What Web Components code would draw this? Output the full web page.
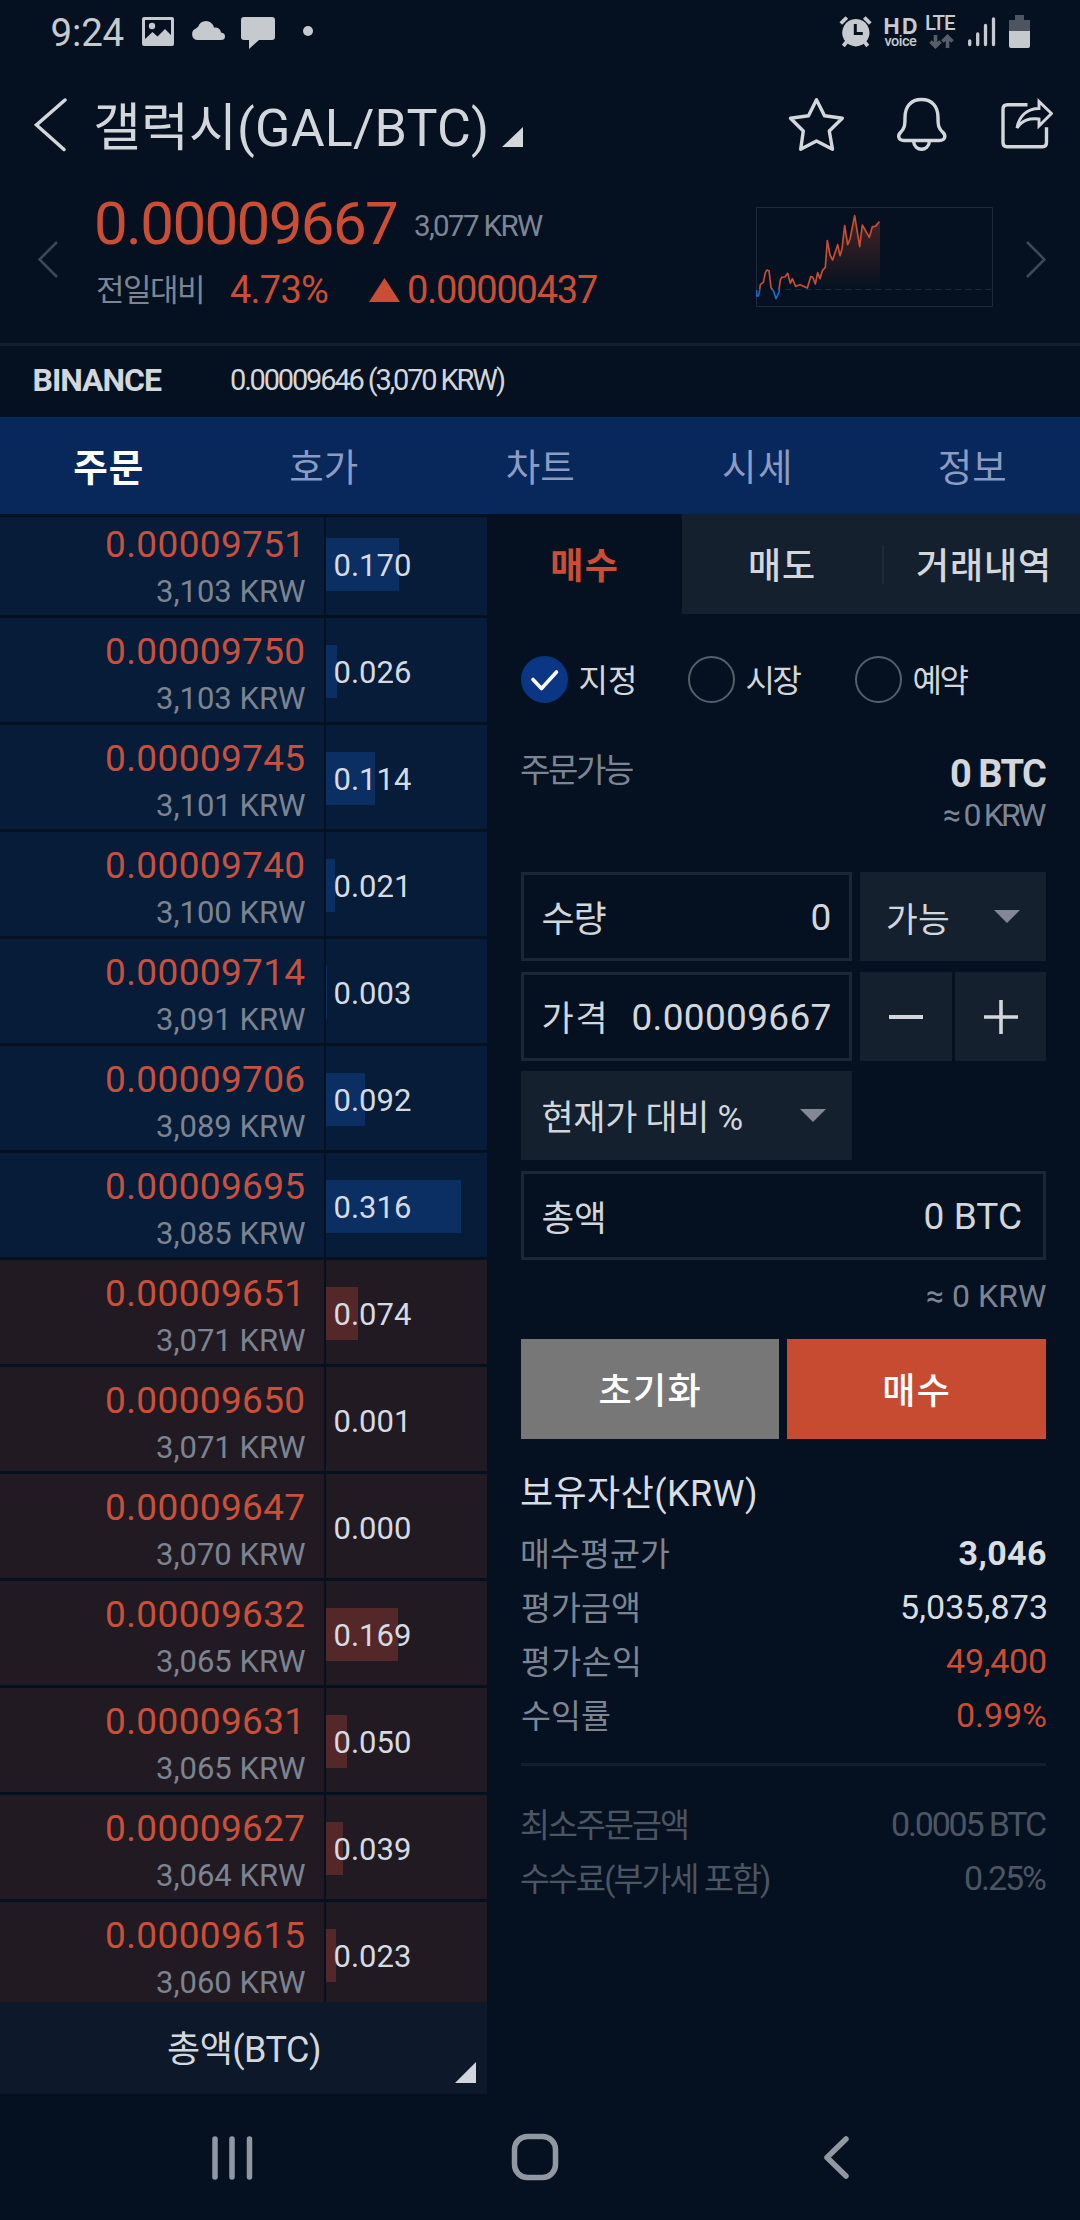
<!DOCTYPE html>
<html lang="ko">
<head>
<meta charset="utf-8">
<title>갤럭시(GAL/BTC)</title>
<style>
html,body{margin:0;background:#051120}
body{width:1080px;height:2220px;overflow:hidden;font-family:Roboto,"Noto Sans CJK KR",sans-serif;color:#d3d7dc;
 --up:#cb4d34;--muted:#7d8594;--dim:#4c5562;--panel:#15202e;--line:#1b2735}
</style>
</head>
<body>
<trade-app></trade-app>
<script>
function define(name, css, html, extra) {
  const tpl = document.createElement('template');
  tpl.innerHTML = '<style>:host{display:block;box-sizing:border-box}*{box-sizing:border-box}svg{display:block;flex:none}' + css + '</style>' + html;
  customElements.define(name, class extends HTMLElement {
    connectedCallback() {
      if (this.shadowRoot) return;
      this.attachShadow({mode: 'open'}).appendChild(tpl.content.cloneNode(true));
      if (extra) extra.call(this, this.shadowRoot);
    }
  });
}

// A single line of text whose letters are tracked so that the glyphs span exactly "w" pixels.
const pen = document.createElement('canvas').getContext('2d');
define('fit-text',
  ':host{flex:none;white-space:pre}span{display:block;width:max-content}',
  '<span><slot></slot></span>',
  function (root) {
    const text = this.textContent, size = +this.getAttribute('size'), w = +this.getAttribute('w');
    const weight = this.getAttribute('weight') || 400, h = this.getAttribute('h') || 40;
    const family = (this.getAttribute('face') || 'Roboto') + ', "Noto Sans CJK KR", sans-serif';
    pen.font = weight + ' ' + size + 'px ' + family;
    const m = pen.measureText(text);
    const ink = m.actualBoundingBoxLeft + m.actualBoundingBoxRight;
    const gap = text.length > 1 ? (w - ink) / (text.length - 1) : 0;
    this.style.cssText += `;width:${w}px;height:${h}px;line-height:${h}px;font-family:${family};font-size:${size}px;font-weight:${weight}`;
    const span = root.querySelector('span');
    span.style.letterSpacing = gap + 'px';
    span.style.marginLeft = m.actualBoundingBoxLeft + 'px';
    // Hangul glyphs sit slightly high in a line box set by the Latin font.
    if (/^[가-힣]/.test(text)) span.style.paddingTop = '1.5px';
  });

define('status-bar', `
  :host{display:flex;height:64px;padding:15px 50px 0 51.6px;color:#c6c9ce}
  .left{margin-left:18px}.right{display:flex;margin-left:auto}
  .hd{margin-left:12.500px;display:flex;flex-direction:column}
  .lte{margin-left:9px}`, `
  <fit-text size="38.500" w="72" h="36">9:24</fit-text>
  <svg class="left" width="172" height="36" viewBox="142 15 172 36" fill="#c6c9ce">
    <path fill-rule="evenodd" d="M144 17h28a2 2 0 0 1 2 2v25a2 2 0 0 1-2 2h-28a2 2 0 0 1-2-2V19a2 2 0 0 1 2-2zM145 20v19l7.500-7 5 4.500 7.500-7.500 6 6V20z"/>
    <circle cx="152" cy="26" r="3.200"/>
    <path d="M197 40a6 6 0 0 1-1-11.500q1-1.500 2-1.500 2-6 8-6 6 0 8 6.500 6-.5 7 5 4 .5 4 4t-4 3.500z"/>
    <path d="M244 17h28q3 0 3 3v17q0 3-3 3h-13l-10 9v-9h-5q-3 0-3-3V20q0-3 3-3z"/>
    <circle cx="308" cy="31" r="5"/>
  </svg>
  <div class="right">
    <svg width="33" height="34" viewBox="839.200 15 33 34" fill="#c6c9ce">
      <path fill-rule="evenodd" d="M856 19a13.700 13.700 0 1 0 .1 0zM854 24h3v8h6v3h-9z"/>
      <path d="M841 23.500l6-6M870.500 23.500l-6-6M843.500 46l4-5M868 46l-4-5" stroke="#c6c9ce" stroke-width="3.800"/>
    </svg>
    <div class="hd"><fit-text face="Inter" size="21.500" w="32.500" h="22" weight="700">HD</fit-text><fit-text size="14.500" w="32.500" h="9" weight="500">voice</fit-text></div>
    <div class="lte"><fit-text size="20.500" w="30" h="17" weight="500">LTE</fit-text>
      <svg width="31" height="17" viewBox="926 32 31 17" fill="none" stroke="#555e69" stroke-width="3.600"><path d="M935.500 35v11M930.500 41.500l5 5 5-5M947.500 48V37M942.500 41.500l5-5 5 5"/></svg></div>
    <svg style="margin-left:10px" width="63" height="34" viewBox="967 15 63 34" fill="#c6c9ce">
      <path d="M969.700 41v3.500M977.700 34v10.500M985.500 25.500v19M993.500 19v25.500" stroke="#c6c9ce" stroke-width="3.300" stroke-linecap="round"/>
      <path d="M1015 15h9v5h6v12h-21V20h6z" fill="#4d5560"/><path d="M1009 31h21v15q0 2-2 2h-17q-2 0-2-2z"/>
    </svg>
  </div>`);

define('title-bar', `
  :host{display:flex;height:122px;align-items:center;padding:0 27px 0 34px}
  fit-text{margin:4px 0 0 29px}.drop{margin:24px 0 0 16px}.actions{display:flex;margin-left:auto;align-items:center}`, `
  <svg width="33" height="56" viewBox="34 97 33 56" fill="none" stroke="#d3d7dc" stroke-width="3.500" stroke-linecap="round"><path d="M65 100L36.500 125 64 149.500"/></svg>
  <fit-text size="52" w="390" h="60">갤럭시(GAL/BTC)</fit-text>
  <svg class="drop" width="21" height="20"><path d="M21 0v20H0z" fill="#d3d7dc"/></svg>
  <div class="actions">
    <svg width="265" height="56" viewBox="788 97 265 56" fill="none" stroke="#d3d7dc" stroke-width="3.400" stroke-linejoin="round">
      <path d="M816.500 99.700L824.500 115.800 842.300 118.300 829.300 131 832.500 149.300 816.500 141 800.700 149.300 803.300 131 790.500 118.300 808.500 115.800z"/>
      <path d="M904 140.500c-6 0-6.500-5-3.500-8 4-4 4.500-7 4.500-15 0-11 6-18 16.500-18s16.500 7 16.500 18c0 8 .5 11 5 15 3 3 2.500 8-3.500 8zM913.500 141c1 11 15 11 16 0"/>
      <path d="M1027.500 104.800h-20q-4.500 0-4.500 4.500v33.500q0 4 4 4h35.500q4 0 4-4v-15.500"/>
      <path d="M1017 128c2-12 10-19.500 22-19.500V101.500l12.500 12-12.500 12.500v-7c-10-1-16.500 1-22 9z" stroke-width="2.900" stroke-linejoin="miter"/>
    </svg>
  </div>`);

define('price-ticker', `
  :host{display:flex;height:160px;padding-top:7px;border-bottom:3px solid #121e2c}
  .arrow{margin-top:48px}.info{margin-left:39px;width:620px}
  .line{display:flex;align-items:center}.price{height:60px}.change{height:73px}
  .up{color:var(--up)}.muted{color:var(--muted)}
  .chart{margin:14px 0 0 39px}`, `
  <svg class="arrow" style="margin-left:38px" width="20" height="37" fill="none" stroke="#3e4855" stroke-width="2.600"><path d="M19 1L1.500 18.500 19 36"/></svg>
  <div class="info">
    <div class="line price"><fit-text class="up" style="margin-top:2px" size="60" w="300" h="60">0.00009667</fit-text><fit-text class="muted" style="margin:5px 0 0 18px" size="29.500" w="128">3,077 KRW</fit-text></div>
    <div class="line change"><fit-text class="muted" size="31" w="105">전일대비</fit-text><fit-text class="up" style="margin-left:28px" size="38" w="98">4.73%</fit-text>
      <svg style="margin-left:41px" width="31" height="24"><path d="M15.500 0L31 24H0z" fill="#cb4d34"/></svg><fit-text class="up" style="margin-left:9px" size="38" w="188">0.00000437</fit-text></div>
  </div>
  <svg class="chart" width="237" height="100" viewBox="48 39 711 300" fill="none">
    <defs><linearGradient id="g" x1="0" y1="0" x2="0" y2="1"><stop offset="0" stop-color="#cb4d34" stop-opacity=".32"/><stop offset="1" stop-color="#cb4d34" stop-opacity="0"/></linearGradient></defs>
    <path d="M49.500 40.500h708v297h-708z" stroke="#1d2a38" stroke-width="3"/>
    <path d="M136 286.500h621" stroke="#1e2b39" stroke-width="3" stroke-dasharray="18 12"/>
    <path d="M202 285L212 248 226 270 233 236 240 254 247 230 256 220 262 140 270 183 278 198 293 152 300 185 306 165 314 95 323 152 330 135 344 65 359 158 367 93 388 130 397 98 406 97 420 83V286H202z" fill="url(#g)"/>
    <g stroke-width="5" stroke-linejoin="round"><path stroke="#1c68c8" d="M50 288L50 306 55 306 60 286M95 284L101 292 108 314 117 295 118 284"/>
    <path stroke="#cb4d34" d="M59 286L61 272 70 265 76 236 81 228 87 230 93 280 96 286M117 286L121 258 125 250 135 249 143 238 151 268 157 254 167 277 180 272 202 282 212 248 218 249 226 270 233 236 240 254 247 230 256 220 262 140 270 183 278 198 293 152 300 185 306 165 314 95 323 152 330 135 344 65 359 158 367 93 388 130 397 98 406 97 418 83"/></g>
  </svg>
  <svg class="arrow" style="margin-left:33px" width="20" height="37" fill="none" stroke="#3e4855" stroke-width="2.600"><path d="M1 1L18.500 18.500 1 36"/></svg>`);

define('exchange-row', `
  :host{display:flex;height:71px;align-items:center;padding:0 0 4px 34.500px}`, `
  <fit-text size="32" w="127.500" weight="700">BINANCE</fit-text>
  <fit-text style="margin-left:69px" size="29" w="274">0.00009646 (3,070 KRW)</fit-text>`);

define('main-tabs', `
  :host{display:flex;height:97px;background:#08275b;color:#8c9bc2;padding-top:2px}
  div{flex:1;display:flex;align-items:center;justify-content:center}.on{color:#fff}`, `
  <div class="on"><fit-text size="37.500" w="67.500" weight="700">주문</fit-text></div>
  <div><fit-text size="37.500" w="67.500">호가</fit-text></div>
  <div><fit-text size="37.500" w="66.500">차트</fit-text></div>
  <div><fit-text size="37.500" w="66">시세</fit-text></div>
  <div><fit-text size="37.500" w="66.500">정보</fit-text></div>`);

define('book-row', `
  :host{display:flex;gap:2px;height:104px;flex:none;--bg:#071c38;--bar:#0b2f62;--price:#c6513f}
  :host([side=bid]){--bg:#221a23;--bar:#542828;--price:#c95039}
  .price,.qty{background:var(--bg)}
  .price{width:324px;padding:14px 18.500px 0 0;text-align:right}
  .p{font-size:37px;line-height:40px;letter-spacing:.35px;color:var(--price)}
  .k{font-size:31px;line-height:40px;margin-top:7px;color:#7c8391}
  .qty{width:161px;padding-top:27px}
  .bar{height:53px;background:var(--bar);font-size:31px;line-height:56px;padding-left:7.500px;white-space:nowrap;color:#d6dbe2}`,
  `<div class="price"><div class="p"></div><div class="k"></div></div><div class="qty"><div class="bar"></div></div>`,
  function (r) {
    r.querySelector('.p').textContent = this.getAttribute('price');
    r.querySelector('.k').textContent = this.getAttribute('krw') + ' KRW';
    const q = this.getAttribute('qty'), bar = r.querySelector('.bar');
    bar.textContent = q;
    bar.style.background = `linear-gradient(90deg,var(--bar) ${Math.round(q * 427)}px,transparent 0)`;
  });

define('order-book', `
  :host{width:487px;flex:none}
  .rows{height:1488px;overflow:hidden;display:flex;flex-direction:column;gap:3px;border-top:3px solid #04101f}
  .rows>:first-child{margin-top:-6px}
  .total{height:92px;background:#0d182a;display:flex;padding:26px 11px 0 168px;justify-content:space-between}
  .total svg{margin-top:34px}`, `
  <div class="rows"></div>
  <div class="total"><fit-text size="36" w="151">총액(BTC)</fit-text><svg width="21" height="21"><path d="M21 0v21H0z" fill="#d3d7dc"/></svg></div>`,
  function (r) {
    const data = [['751','3,103','0.170'],['750','3,103','0.026'],['745','3,101','0.114'],['740','3,100','0.021'],['714','3,091','0.003'],['706','3,089','0.092'],['695','3,085','0.316'],
      ['651','3,071','0.074'],['650','3,071','0.001'],['647','3,070','0.000'],['632','3,065','0.169'],['631','3,065','0.050'],['627','3,064','0.039'],['615','3,060','0.023']];
    r.querySelector('.rows').innerHTML = data.map((d, i) =>
      `<book-row side="${i < 7 ? 'ask' : 'bid'}" price="0.00009${d[0]}" krw="${d[1]}" qty="${d[2]}"></book-row>`).join('');
  });

define('side-tabs', `
  :host{display:flex;height:100px}
  div{display:flex;align-items:center;justify-content:center;padding-top:3px;background:var(--panel)}
  .on{width:195px;flex:none;background:none;color:var(--up)}.b{width:200px;flex:none}.c{flex:1}
  i{width:2px;height:39px;background:#1f2a39}
  .wrap{padding:0}`, `
  <div class="on"><fit-text size="36" w="64.500" weight="700">매수</fit-text></div>
  <div class="b"><fit-text size="36" w="64" weight="500">매도</fit-text></div>
  <div class="wrap"><i></i></div>
  <div class="c"><fit-text size="36" w="130" weight="500">거래내역</fit-text></div>`);

define('radio-option', `
  :host{display:flex;align-items:center;width:167px}
  .dot{width:47px;height:47px;border-radius:50%;border:2px solid #555f6b;flex:none;margin-right:11.500px;display:flex;align-items:center;justify-content:center}
  svg{display:none}:host([checked]) .dot{background:#0b3585;border-color:#0b3585}:host([checked]) svg{display:block}`, `
  <div class="dot"><svg width="30" height="26" fill="none" stroke="#fff" stroke-width="3.600" stroke-linecap="round" stroke-linejoin="round"><path d="M3 12.500l8.500 9L26.500 5"/></svg></div><slot></slot>`);

define('field-box', `
  :host{display:flex;align-items:center;justify-content:space-between;height:89px;border:3px solid var(--line);padding:3px 18.500px 0}
  :host([filled]){background:var(--panel);border-color:var(--panel)}`, `<slot></slot>`);

define('drop-arrow', `:host{margin-top:-4px}`, `<svg width="26" height="13"><path d="M0 0h26L13 13z" fill="#828994"/></svg>`);

define('order-form', `
  :host{padding:42px 34px 0}
  .row{display:flex;gap:8px}
  .radios{display:flex;height:47px;margin-bottom:41px}
  .avail{display:flex;justify-content:space-between;height:128px;color:var(--muted)}
  .avail .r{display:flex;flex-direction:column;align-items:flex-end;gap:1px}
  .left{width:331px}.sel{width:186px}
  .step{width:92px;background:var(--panel);display:flex;align-items:center;justify-content:center}
  .krw{display:flex;justify-content:flex-end;margin:16px 0 23px;color:var(--muted)}
  .btn{height:100px;color:#fff;display:flex;align-items:center;justify-content:center;padding-top:2px}`, `
  <div class="radios"><radio-option checked><fit-text size="32" w="54.500">지정</fit-text></radio-option><radio-option><fit-text size="32" w="55">시장</fit-text></radio-option><radio-option><fit-text size="32" w="55">예약</fit-text></radio-option></div>
  <div class="avail"><fit-text size="33" w="112" h="50">주문가능</fit-text><div class="r"><fit-text style="color:#d3d7dc;margin-top:10px" size="38" w="95" weight="700">0 BTC</fit-text><fit-text size="32" w="102">≈ 0 KRW</fit-text></div></div>
  <div class="row" style="margin-bottom:11px"><field-box class="left"><fit-text size="36" w="63">수량</fit-text><fit-text size="37" w="18">0</fit-text></field-box><field-box class="sel" filled style="padding-left:24px;padding-right:23px"><fit-text size="34.500" w="61">가능</fit-text><drop-arrow></drop-arrow></field-box></div>
  <div class="row" style="margin-bottom:10px"><field-box class="left"><fit-text size="35" w="61">가격</fit-text><fit-text size="37" w="197">0.00009667</fit-text></field-box><div style="display:flex;gap:3px"><div class="step"><svg width="34" height="4"><path d="M0 0h34v4H0z" fill="#d3d7dc"/></svg></div><div class="step" style="width:91px"><svg width="34" height="34"><path d="M15.200 0h3.600v15.200H34v3.600H18.800V34h-3.600V18.800H0v-3.600h15.200z" fill="#d3d7dc"/></svg></div></div></div>
  <field-box class="left" filled style="padding-right:23px;margin-bottom:11px"><fit-text size="35" w="200">현재가 대비 %</fit-text><drop-arrow></drop-arrow></field-box>
  <field-box style="padding-right:22px"><fit-text size="35.500" w="60.500">총액</fit-text><fit-text size="37" w="95.500">0 BTC</fit-text></field-box>
  <div class="krw"><fit-text size="32" w="119">≈ 0 KRW</fit-text></div>
  <div class="row"><div class="btn" style="width:258px;background:#777"><fit-text size="36" w="101" weight="500">초기화</fit-text></div><div class="btn" style="width:259px;background:#c74b31"><fit-text size="36" w="64.500" weight="500">매수</fit-text></div></div>`);

define('info-row', `:host{display:flex;justify-content:space-between;height:54px;align-items:center;color:var(--muted)}`, `<slot></slot>`);

define('asset-summary', `
  :host{padding:33px 34px 0}
  .w{color:#dadde1}.up{color:var(--up)}hr{border:0;height:3px;background:#121e2b;margin:21px 0 31px}.dim info-row{color:var(--dim)}`, `
  <fit-text size="36" w="234" class="w">보유자산(KRW)</fit-text>
  <div style="padding:14px 0 0 1px">
    <info-row><fit-text size="32.500" w="147">매수평균가</fit-text><fit-text class="w" size="34" w="86.500" weight="700">3,046</fit-text></info-row>
    <info-row><fit-text size="32.500" w="116">평가금액</fit-text><fit-text class="w" size="34" w="144">5,035,873</fit-text></info-row>
    <info-row><fit-text size="32.500" w="116">평가손익</fit-text><fit-text class="up" size="34" w="100">49,400</fit-text></info-row>
    <info-row><fit-text size="32.500" w="88">수익률</fit-text><fit-text class="up" size="34" w="89">0.99%</fit-text></info-row>
  </div>
  <hr>
  <div class="dim">
    <info-row><fit-text size="32.500" w="166">최소주문금액</fit-text><fit-text size="34" w="154">0.0005 BTC</fit-text></info-row>
    <info-row><fit-text size="32.500" w="248">수수료(부가세 포함)</fit-text><fit-text size="34" w="81">0.25%</fit-text></info-row>
  </div>`);

define('nav-bar', `:host{height:126px;display:flex;padding:39px 230px 0 211px;justify-content:space-between}`, `
  <svg width="42" height="48" fill="none" stroke="#9198a2" stroke-width="5.500" stroke-linecap="round"><path d="M4 6v38M21 6v38M38.500 6v38"/></svg>
  <svg width="48" height="48" style="margin-right:5px" fill="none" stroke="#9198a2" stroke-width="5.500"><rect x="3.500" y="3.500" width="41" height="41" rx="13"/></svg>
  <svg width="28" height="48" fill="none" stroke="#9198a2" stroke-width="5.500" stroke-linecap="round" stroke-linejoin="round"><path d="M24 6L5 24.500 24 43"/></svg>`);

define('trade-app', `.main{display:flex;height:1580px}.side{width:593px}`, `
  <status-bar></status-bar><title-bar></title-bar><price-ticker></price-ticker><exchange-row></exchange-row><main-tabs></main-tabs>
  <div class="main"><order-book></order-book><div class="side"><side-tabs></side-tabs><order-form></order-form><asset-summary></asset-summary></div></div>
  <nav-bar></nav-bar>`);
</script>
</body>
</html>
